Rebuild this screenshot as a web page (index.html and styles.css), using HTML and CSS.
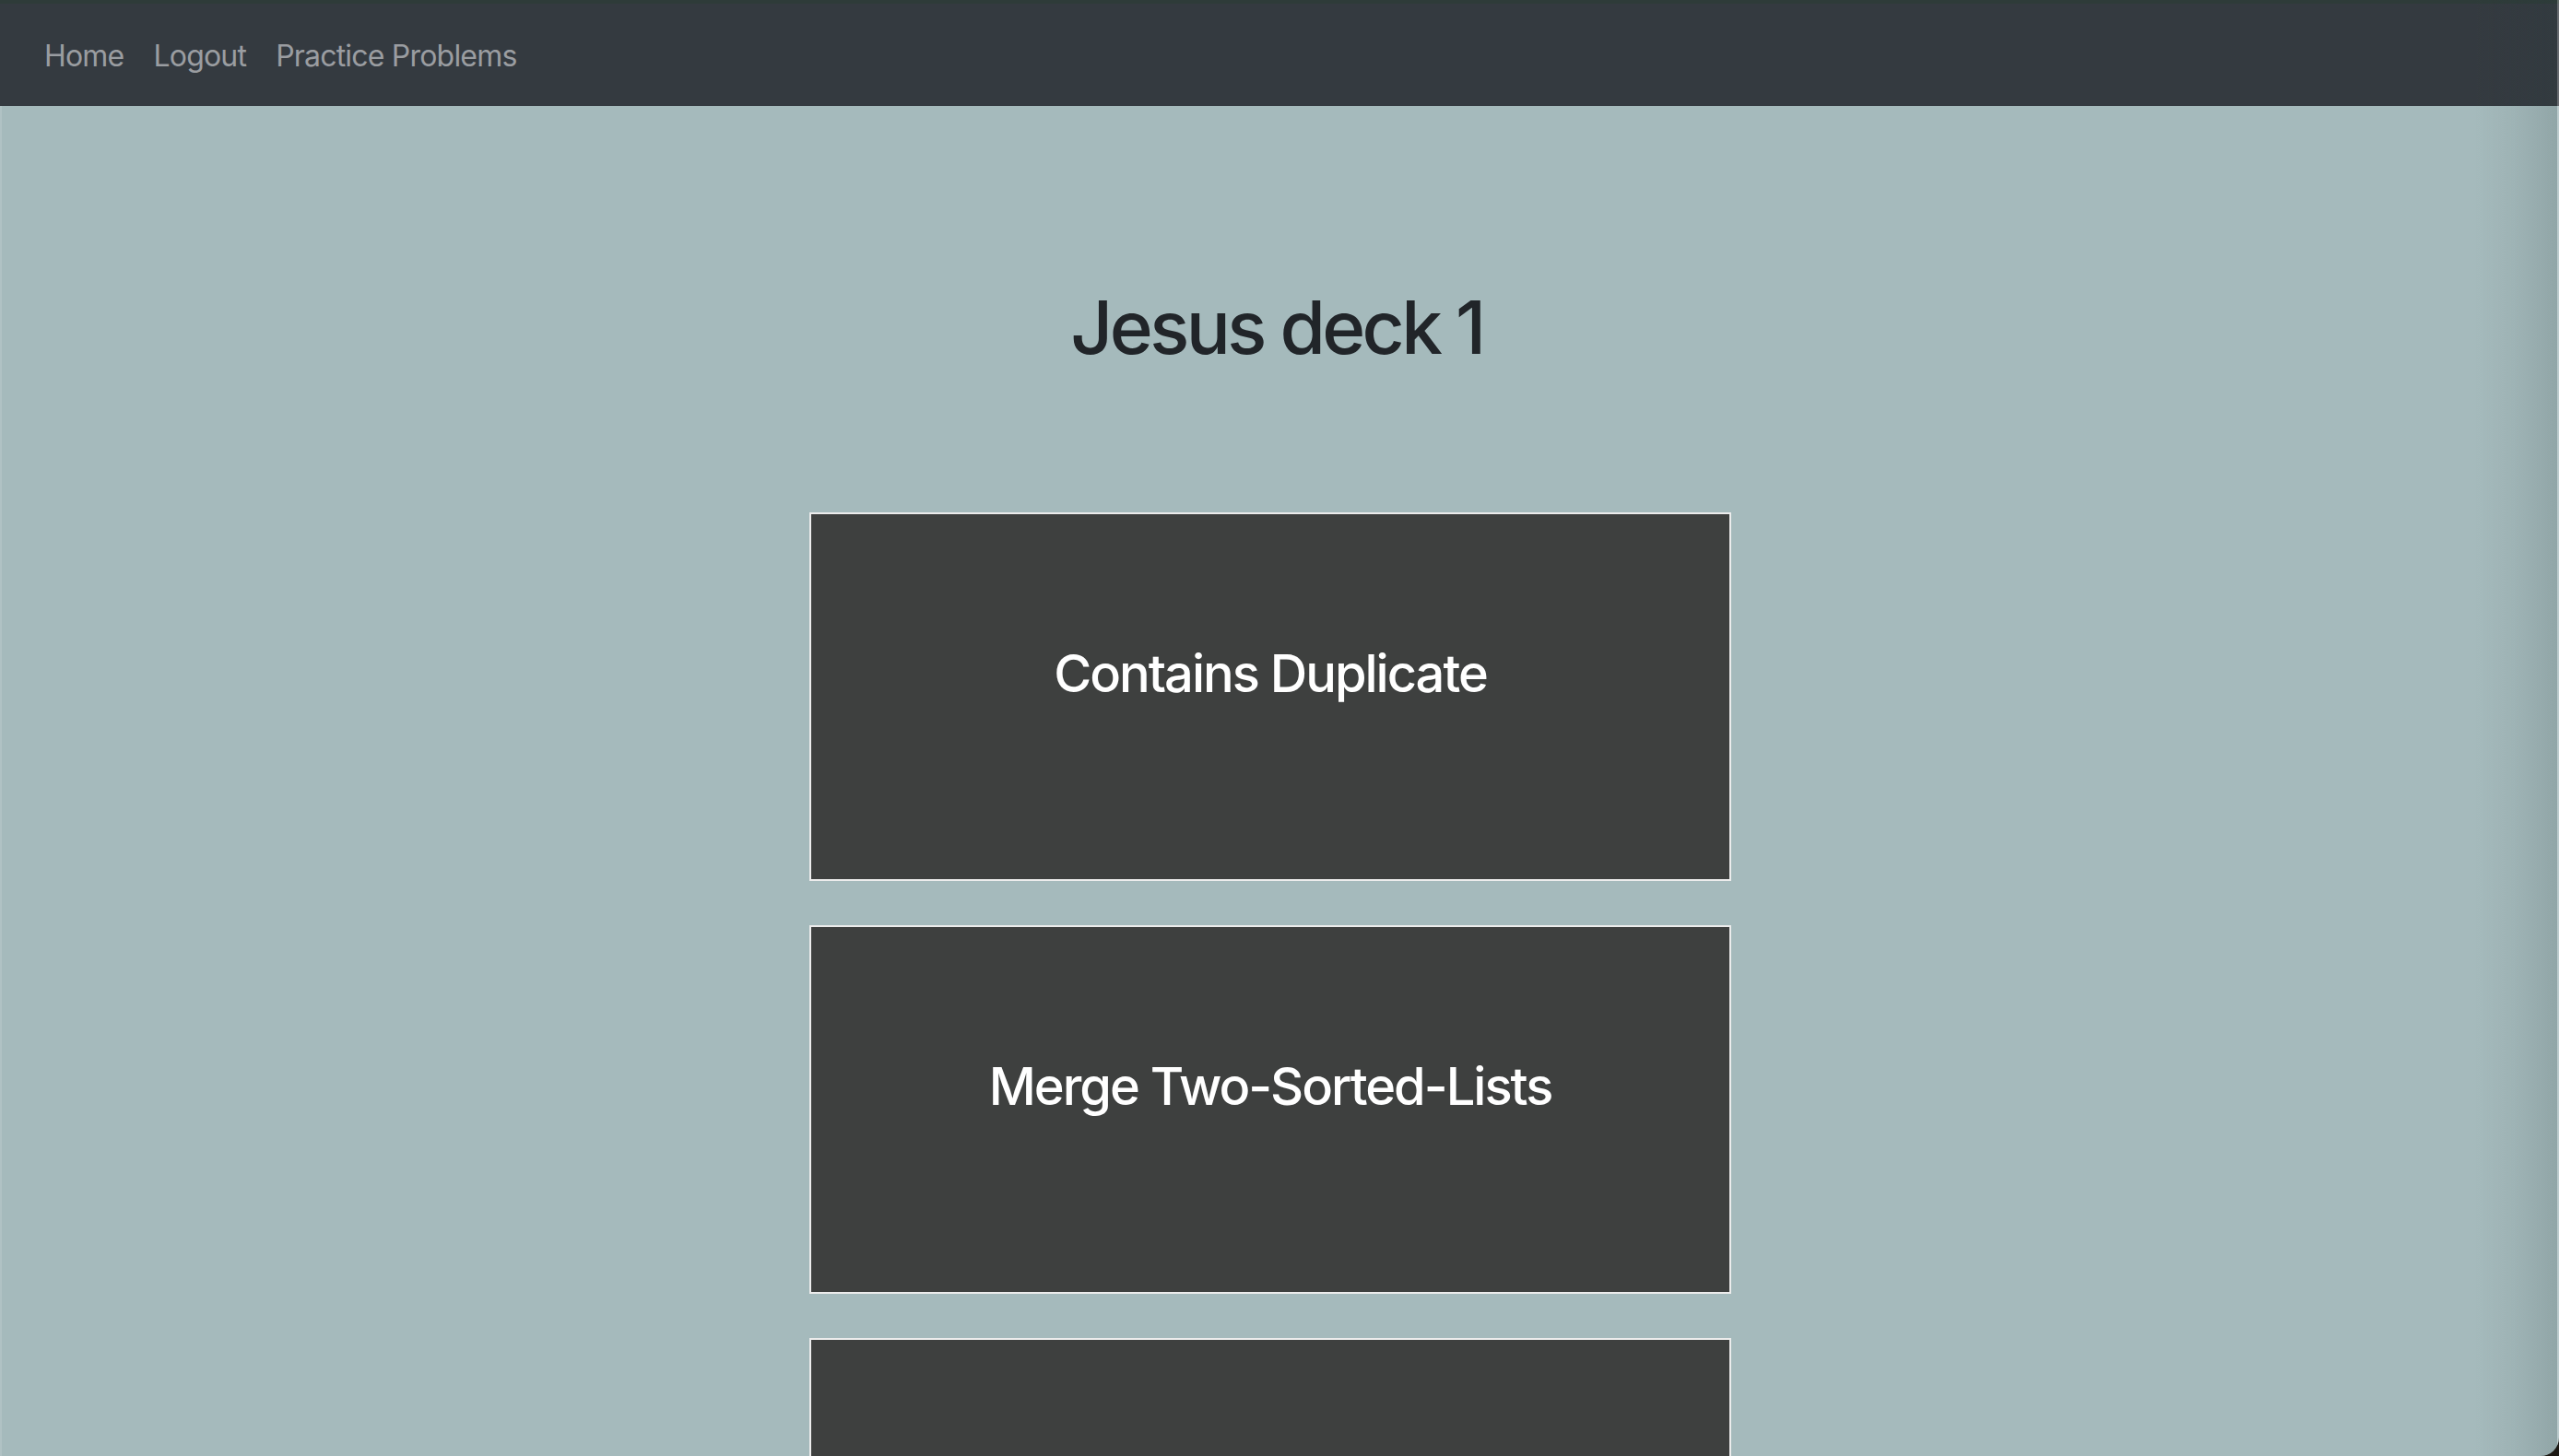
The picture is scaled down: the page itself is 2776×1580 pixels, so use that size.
FILE: index.html
```html
<!DOCTYPE html>
<html lang="en">
<head>
<meta charset="utf-8">
<title>Jesus deck 1</title>
<link rel="stylesheet" href="styles.css">
</head>
<body>
<div class="window">
  <div class="topline"></div>
  <nav class="navbar">
    <a class="nav-link" href="#">Home</a>
    <a class="nav-link" href="#">Logout</a>
    <a class="nav-link" href="#">Practice Problems</a>
  </nav>
  <main class="main">
    <h1 class="title">Jesus deck 1</h1>
    <div class="deck">
      <div class="card"><h3 class="card-title">Contains Duplicate</h3></div>
      <div class="card"><h3 class="card-title">Merge Two-Sorted-Lists</h3></div>
      <div class="card"><h3 class="card-title"></h3></div>
    </div>
  </main>
  <div class="edge-shade"></div>
</div>
</body>
</html>
```

FILE: styles.css
```css
html, body {
  margin: 0;
  padding: 0;
  height: 100%;
  overflow: hidden;
  background: #1b1813;
}
body {
  font-family: Inter, "Noto Sans", sans-serif;
}
.window {
  position: relative;
  height: 1580px;
  background: #a5babc;
  border-bottom-right-radius: 20px;
  overflow: hidden;
  box-shadow: inset 2px 0 0 rgba(255,255,255,0.12);
}
.topline {
  height: 4px;
  background: #2e3b39;
}
.navbar {
  box-sizing: border-box;
  display: flex;
  align-items: center;
  height: 111px;
  background: #343a40;
  padding-left: 32px;
  padding-top: 3px;
}
.nav-link {
  color: #9a9da1;
  text-decoration: none;
  font-size: 32px;
  line-height: 48px;
  padding: 0 16px;
  letter-spacing: -0.8px;
}
.main {
  width: 2756px;
  display: flex;
  flex-direction: column;
  align-items: center;
  padding-top: 192px;
}
.title {
  margin: 0;
  font-size: 80px;
  line-height: 96px;
  font-weight: 500;
  color: #212529;
  letter-spacing: -3.6px;
  padding-left: 14px;
}
.deck {
  margin-top: 153px;
  display: flex;
  flex-direction: column;
  gap: 48px;
}
.card {
  box-sizing: border-box;
  width: 1000px;
  height: 400px;
  background: #3e403f;
  border: 2px solid #ececec;
  padding-top: 140px;
  text-align: center;
}
.card-title {
  margin: 0;
  color: #ffffff;
  font-size: 56px;
  line-height: 67px;
  font-weight: 500;
  letter-spacing: -2px;
}
.edge-shade {
  position: absolute;
  top: 0;
  right: 0;
  width: 90px;
  height: 100%;
  background: linear-gradient(to right, rgba(40,60,60,0) 0%, rgba(40,60,60,0.06) 50%, rgba(40,60,60,0.16) 100%);
  border-right: 2px solid rgba(255,255,255,0.25);
  pointer-events: none;
}
```
